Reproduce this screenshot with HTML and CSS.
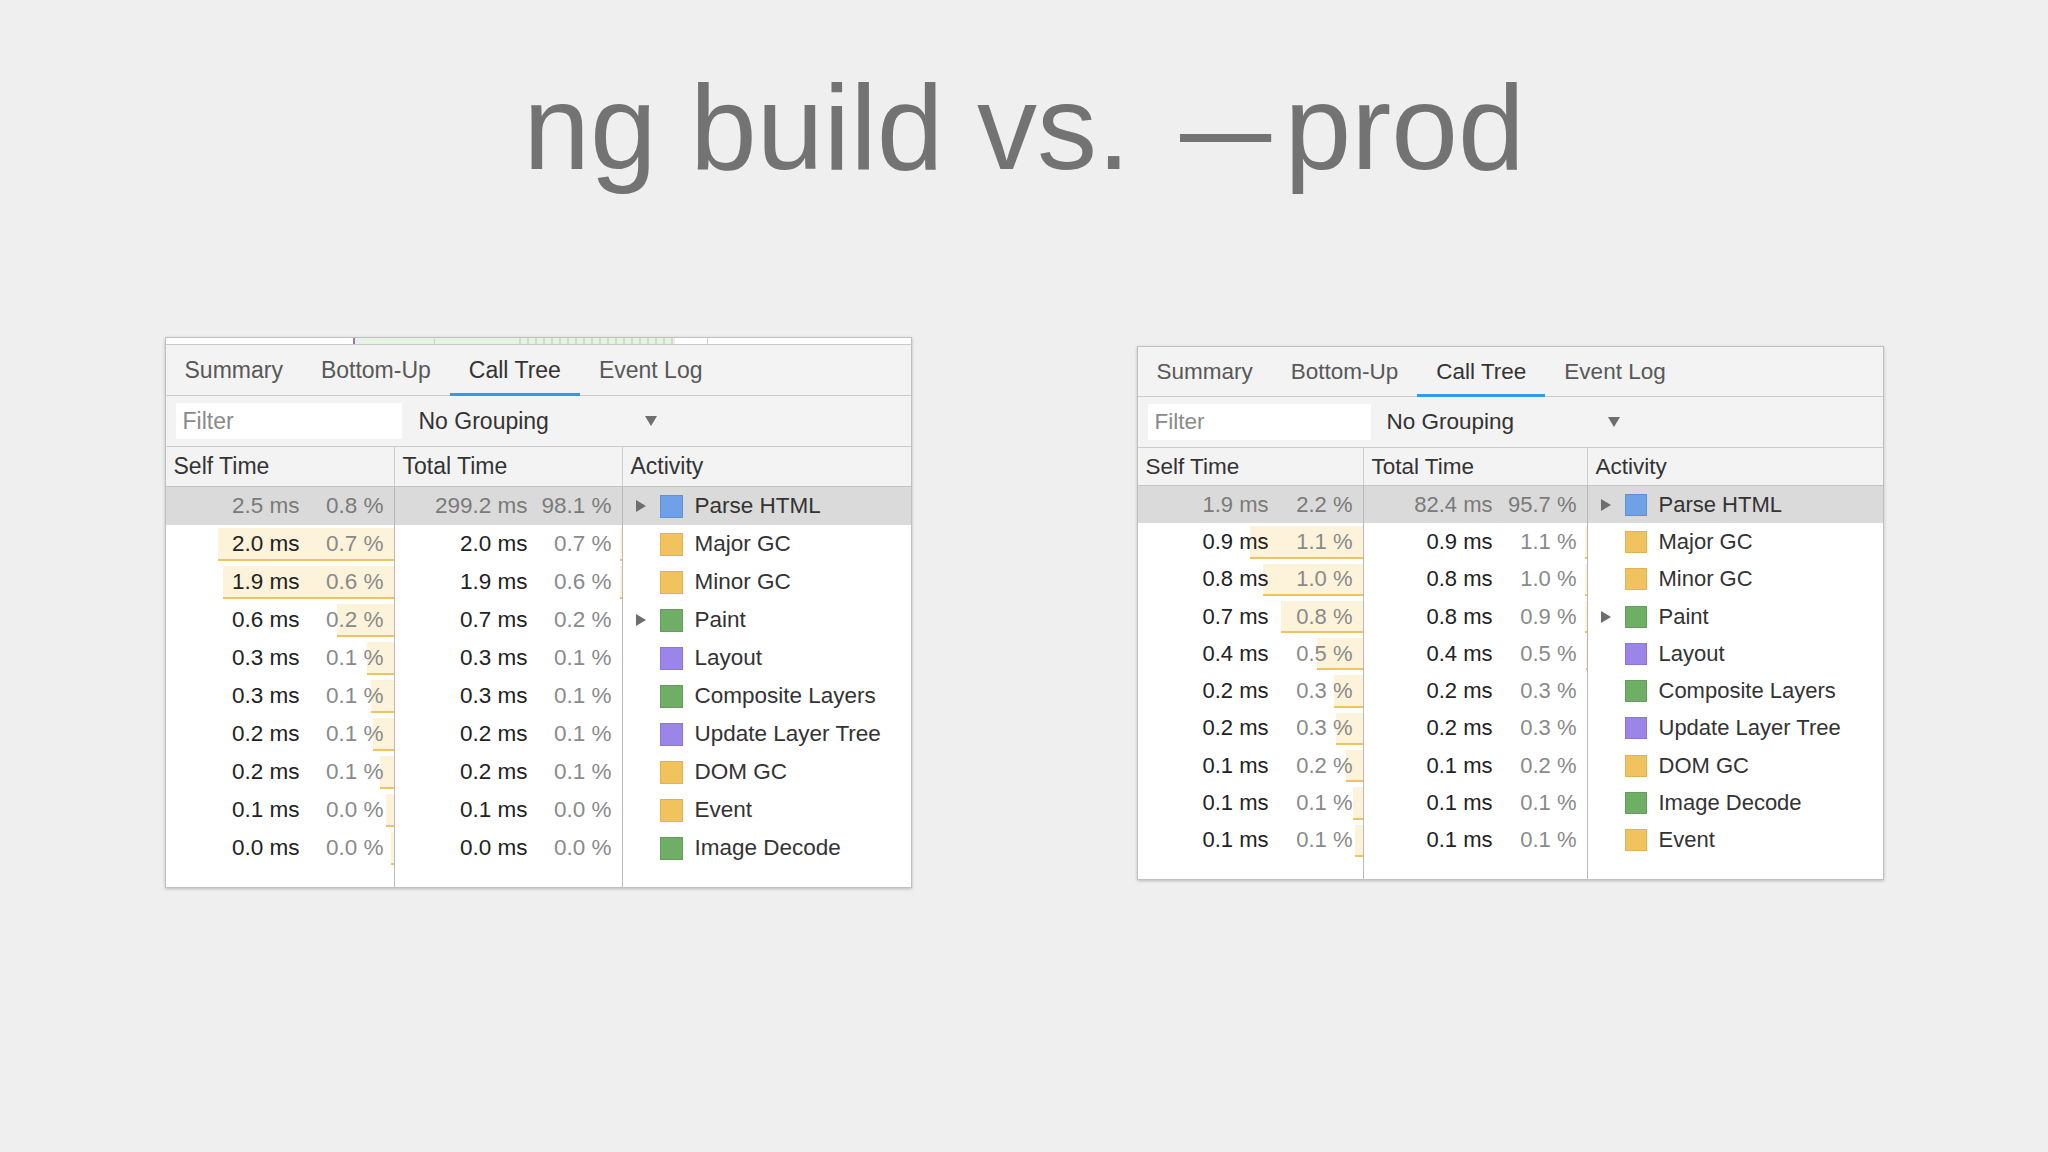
FILE: index.html
```html
<!DOCTYPE html>
<html lang="en">
<head>
<meta charset="utf-8">
<title>ng build vs. —prod</title>
<link rel="stylesheet" href="styles.css">
</head>
<body>
<div class="slide">
  <h1 class="title">ng build vs. <span class="title__dash">—</span>prod</h1>
  <div class="panels">

    <section class="panel panel--left">
      <div class="strip">
        <span class="strip__tick strip__tick--color"></span>
        <span class="strip__green">
          <span class="strip__mark strip__mark--a"></span>
          <span class="strip__dots"></span>
        </span>
        <span class="strip__mark strip__mark--b"></span>
      </div>
      <nav class="tabs">
        <span class="tab">Summary</span>
        <span class="tab">Bottom-Up</span>
        <span class="tab tab--active">Call Tree</span>
        <span class="tab">Event Log</span>
      </nav>
      <div class="toolbar">
        <div class="filter">Filter</div>
        <div class="grouping"><span>No Grouping</span><svg class="arrow" viewBox="0 0 12 10"><polygon points="0,0 12,0 6,10"/></svg></div>
      </div>
      <div class="table">
        <div class="row row--head"><div class="cell">Self Time</div><div class="cell">Total Time</div><div class="cell">Activity</div></div>

        <div class="row row--selected">
          <div class="cell num"><span class="ms">2.5 ms</span><span class="pct">0.8 %</span></div>
          <div class="cell num"><span class="ms">299.2 ms</span><span class="pct">98.1 %</span></div>
          <div class="cell act"><svg class="expander" viewBox="0 0 10 12"><polygon points="0,0 10,6 0,12"/></svg><span class="swatch swatch--blue"></span><span>Parse HTML</span></div>
        </div>
        <div class="row">
          <div class="cell num bar" style="--w:176px"><span class="ms">2.0 ms</span><span class="pct">0.7 %</span></div>
          <div class="cell num bar" style="--w:2px"><span class="ms">2.0 ms</span><span class="pct">0.7 %</span></div>
          <div class="cell act"><svg class="expander expander--none" viewBox="0 0 10 12"></svg><span class="swatch swatch--yellow"></span><span>Major GC</span></div>
        </div>
        <div class="row">
          <div class="cell num bar" style="--w:171px"><span class="ms">1.9 ms</span><span class="pct">0.6 %</span></div>
          <div class="cell num bar" style="--w:2px"><span class="ms">1.9 ms</span><span class="pct">0.6 %</span></div>
          <div class="cell act"><svg class="expander expander--none" viewBox="0 0 10 12"></svg><span class="swatch swatch--yellow"></span><span>Minor GC</span></div>
        </div>
        <div class="row">
          <div class="cell num bar" style="--w:57px"><span class="ms">0.6 ms</span><span class="pct">0.2 %</span></div>
          <div class="cell num"><span class="ms">0.7 ms</span><span class="pct">0.2 %</span></div>
          <div class="cell act"><svg class="expander" viewBox="0 0 10 12"><polygon points="0,0 10,6 0,12"/></svg><span class="swatch swatch--green"></span><span>Paint</span></div>
        </div>
        <div class="row">
          <div class="cell num bar" style="--w:27px"><span class="ms">0.3 ms</span><span class="pct">0.1 %</span></div>
          <div class="cell num"><span class="ms">0.3 ms</span><span class="pct">0.1 %</span></div>
          <div class="cell act"><svg class="expander expander--none" viewBox="0 0 10 12"></svg><span class="swatch swatch--purple"></span><span>Layout</span></div>
        </div>
        <div class="row">
          <div class="cell num bar" style="--w:23px"><span class="ms">0.3 ms</span><span class="pct">0.1 %</span></div>
          <div class="cell num"><span class="ms">0.3 ms</span><span class="pct">0.1 %</span></div>
          <div class="cell act"><svg class="expander expander--none" viewBox="0 0 10 12"></svg><span class="swatch swatch--green"></span><span>Composite Layers</span></div>
        </div>
        <div class="row">
          <div class="cell num bar" style="--w:21px"><span class="ms">0.2 ms</span><span class="pct">0.1 %</span></div>
          <div class="cell num"><span class="ms">0.2 ms</span><span class="pct">0.1 %</span></div>
          <div class="cell act"><svg class="expander expander--none" viewBox="0 0 10 12"></svg><span class="swatch swatch--purple"></span><span>Update Layer Tree</span></div>
        </div>
        <div class="row">
          <div class="cell num bar" style="--w:14px"><span class="ms">0.2 ms</span><span class="pct">0.1 %</span></div>
          <div class="cell num"><span class="ms">0.2 ms</span><span class="pct">0.1 %</span></div>
          <div class="cell act"><svg class="expander expander--none" viewBox="0 0 10 12"></svg><span class="swatch swatch--yellow"></span><span>DOM GC</span></div>
        </div>
        <div class="row">
          <div class="cell num bar" style="--w:8px"><span class="ms">0.1 ms</span><span class="pct">0.0 %</span></div>
          <div class="cell num"><span class="ms">0.1 ms</span><span class="pct">0.0 %</span></div>
          <div class="cell act"><svg class="expander expander--none" viewBox="0 0 10 12"></svg><span class="swatch swatch--yellow"></span><span>Event</span></div>
        </div>
        <div class="row">
          <div class="cell num bar" style="--w:3px"><span class="ms">0.0 ms</span><span class="pct">0.0 %</span></div>
          <div class="cell num"><span class="ms">0.0 ms</span><span class="pct">0.0 %</span></div>
          <div class="cell act"><svg class="expander expander--none" viewBox="0 0 10 12"></svg><span class="swatch swatch--green"></span><span>Image Decode</span></div>
        </div>
        <div class="row row--filler"><div class="cell"></div><div class="cell"></div><div class="cell"></div></div>
      </div>
    </section>

    <section class="panel panel--right">
      <nav class="tabs">
        <span class="tab">Summary</span>
        <span class="tab">Bottom-Up</span>
        <span class="tab tab--active">Call Tree</span>
        <span class="tab">Event Log</span>
      </nav>
      <div class="toolbar">
        <div class="filter">Filter</div>
        <div class="grouping"><span>No Grouping</span><svg class="arrow" viewBox="0 0 12 10"><polygon points="0,0 12,0 6,10"/></svg></div>
      </div>
      <div class="table">
        <div class="row row--head"><div class="cell">Self Time</div><div class="cell">Total Time</div><div class="cell">Activity</div></div>

        <div class="row row--selected">
          <div class="cell num"><span class="ms">1.9 ms</span><span class="pct">2.2 %</span></div>
          <div class="cell num"><span class="ms">82.4 ms</span><span class="pct">95.7 %</span></div>
          <div class="cell act"><svg class="expander" viewBox="0 0 10 12"><polygon points="0,0 10,6 0,12"/></svg><span class="swatch swatch--blue"></span><span>Parse HTML</span></div>
        </div>
        <div class="row">
          <div class="cell num bar" style="--w:113px"><span class="ms">0.9 ms</span><span class="pct">1.1 %</span></div>
          <div class="cell num bar" style="--w:2px"><span class="ms">0.9 ms</span><span class="pct">1.1 %</span></div>
          <div class="cell act"><svg class="expander expander--none" viewBox="0 0 10 12"></svg><span class="swatch swatch--yellow"></span><span>Major GC</span></div>
        </div>
        <div class="row">
          <div class="cell num bar" style="--w:100px"><span class="ms">0.8 ms</span><span class="pct">1.0 %</span></div>
          <div class="cell num bar" style="--w:2px"><span class="ms">0.8 ms</span><span class="pct">1.0 %</span></div>
          <div class="cell act"><svg class="expander expander--none" viewBox="0 0 10 12"></svg><span class="swatch swatch--yellow"></span><span>Minor GC</span></div>
        </div>
        <div class="row">
          <div class="cell num bar" style="--w:82px"><span class="ms">0.7 ms</span><span class="pct">0.8 %</span></div>
          <div class="cell num bar" style="--w:2px"><span class="ms">0.8 ms</span><span class="pct">0.9 %</span></div>
          <div class="cell act"><svg class="expander" viewBox="0 0 10 12"><polygon points="0,0 10,6 0,12"/></svg><span class="swatch swatch--green"></span><span>Paint</span></div>
        </div>
        <div class="row">
          <div class="cell num bar" style="--w:46px"><span class="ms">0.4 ms</span><span class="pct">0.5 %</span></div>
          <div class="cell num bar" style="--w:1px"><span class="ms">0.4 ms</span><span class="pct">0.5 %</span></div>
          <div class="cell act"><svg class="expander expander--none" viewBox="0 0 10 12"></svg><span class="swatch swatch--purple"></span><span>Layout</span></div>
        </div>
        <div class="row">
          <div class="cell num bar" style="--w:29px"><span class="ms">0.2 ms</span><span class="pct">0.3 %</span></div>
          <div class="cell num"><span class="ms">0.2 ms</span><span class="pct">0.3 %</span></div>
          <div class="cell act"><svg class="expander expander--none" viewBox="0 0 10 12"></svg><span class="swatch swatch--green"></span><span>Composite Layers</span></div>
        </div>
        <div class="row">
          <div class="cell num bar" style="--w:27px"><span class="ms">0.2 ms</span><span class="pct">0.3 %</span></div>
          <div class="cell num"><span class="ms">0.2 ms</span><span class="pct">0.3 %</span></div>
          <div class="cell act"><svg class="expander expander--none" viewBox="0 0 10 12"></svg><span class="swatch swatch--purple"></span><span>Update Layer Tree</span></div>
        </div>
        <div class="row">
          <div class="cell num bar" style="--w:17px"><span class="ms">0.1 ms</span><span class="pct">0.2 %</span></div>
          <div class="cell num"><span class="ms">0.1 ms</span><span class="pct">0.2 %</span></div>
          <div class="cell act"><svg class="expander expander--none" viewBox="0 0 10 12"></svg><span class="swatch swatch--yellow"></span><span>DOM GC</span></div>
        </div>
        <div class="row">
          <div class="cell num bar" style="--w:10px"><span class="ms">0.1 ms</span><span class="pct">0.1 %</span></div>
          <div class="cell num"><span class="ms">0.1 ms</span><span class="pct">0.1 %</span></div>
          <div class="cell act"><svg class="expander expander--none" viewBox="0 0 10 12"></svg><span class="swatch swatch--green"></span><span>Image Decode</span></div>
        </div>
        <div class="row">
          <div class="cell num bar" style="--w:8px"><span class="ms">0.1 ms</span><span class="pct">0.1 %</span></div>
          <div class="cell num"><span class="ms">0.1 ms</span><span class="pct">0.1 %</span></div>
          <div class="cell act"><svg class="expander expander--none" viewBox="0 0 10 12"></svg><span class="swatch swatch--yellow"></span><span>Event</span></div>
        </div>
        <div class="row row--filler"><div class="cell"></div><div class="cell"></div><div class="cell"></div></div>
      </div>
    </section>

  </div>
</div>
</body>
</html>
```

FILE: styles.css
```css
* { box-sizing: border-box; }

body {
  margin: 0;
  background: #efefef;
  font-family: "Liberation Sans", Arial, sans-serif;
}

.slide {
  width: 2048px;
  height: 1152px;
  padding-top: 57px;
}

.title {
  margin: 0;
  text-align: center;
  font-weight: 400;
  font-size: 120px;
  line-height: 140px;
  color: #737373;
}

.title__dash {
  display: inline-block;
  transform: scaleX(0.76);
  transform-origin: left center;
  margin-left: 16px;
  margin-right: -15px;
}

.panels {
  margin-top: 140px;
  display: flex;
  justify-content: center;
  align-items: flex-start;
  gap: 225px;
}

.panel {
  --c1: 229px;
  --c2: 228px;
  --rh: 38px;
  --fs: 22.5px;
  --tabfs: 23px;
  --headh: 40px;
  --tabh: 51px;
  --filterw: 226px;
  --groupgap: 17px;
  --groupw: 238px;
  width: 747px;
  background: #fff;
  border: 1px solid #c0c0c0;
  box-shadow: 0 1px 3px rgba(0, 0, 0, 0.22);
  display: flex;
  flex-direction: column;
  color: #333;
}

.panel--right {
  --c1: 226px;
  --c2: 224px;
  --rh: 37.3px;
  --fs: 22px;
  --tabfs: 22.5px;
  --headh: 38px;
  --tabh: 50px;
  --filterw: 223px;
  --groupgap: 16px;
  --groupw: 233px;
  margin-top: 9px;
}

/* timeline overview strip */
.strip {
  height: 7px;
  background: #fff;
  border-bottom: 1px solid #c8c8c8;
  display: flex;
  align-items: stretch;
  padding-left: 187px;
}

.strip__tick--color {
  width: 2px;
  background: linear-gradient(90deg, #d06a8a, #6a7fe0);
}

.strip__green {
  width: 320px;
  background: #e6f2e2;
  display: flex;
  align-items: stretch;
  padding-left: 79px;
}

.strip__mark {
  width: 1px;
  background: #cfcfcf;
}

.strip__dots {
  margin-left: 84px;
  width: 155px;
  background: repeating-linear-gradient(90deg, #c9e3c2 0 2px, transparent 2px 8px);
}

.strip__mark--b {
  margin-left: 32px;
}

/* tabs */
.tabs {
  height: var(--tabh);
  background: #f3f3f3;
  border-bottom: 1px solid #cbcbcb;
  display: flex;
}

.tab {
  display: flex;
  align-items: center;
  padding: 0 19px;
  margin-bottom: -1px;
  font-size: var(--tabfs);
  color: #585858;
}

.tab--active {
  color: #333;
  box-shadow: inset 0 -3px 0 #3399ea;
}

/* toolbar */
.toolbar {
  height: 51px;
  background: #f3f3f3;
  border-bottom: 1px solid #cbcbcb;
  display: flex;
  align-items: center;
  padding-left: 10px;
}

.filter {
  width: var(--filterw);
  height: 36px;
  background: #fff;
  padding-left: 7px;
  display: flex;
  align-items: center;
  font-size: var(--tabfs);
  color: #8a8a8a;
}

.grouping {
  margin-left: var(--groupgap);
  width: var(--groupw);
  display: flex;
  justify-content: space-between;
  align-items: center;
  font-size: var(--tabfs);
  color: #333;
}

.arrow {
  width: 12px;
  height: 10px;
  fill: #6e6e6e;
}

/* table */
.table {
  display: flex;
  flex-direction: column;
}

.row {
  display: grid;
  grid-template-columns: var(--c1) var(--c2) 1fr;
  height: var(--rh);
  font-size: var(--fs);
}

.cell {
  border-right: 1px solid #b8b8b8;
  display: flex;
  align-items: center;
  white-space: nowrap;
}

.cell:last-child {
  border-right: 0;
}

.row--head {
  height: var(--headh);
  background: #f3f3f3;
  border-bottom: 1px solid #c4c4c4;
  font-size: var(--tabfs);
  color: #333;
}

.row--head .cell {
  padding-left: 8px;
  border-right-color: #cdcdcd;
}

.row--selected {
  background: #dadada;
}

.row--filler {
  height: 20px;
}

.num {
  justify-content: flex-end;
  padding-right: 10px;
}

.ms {
  color: #222;
}

.pct {
  width: 84px;
  text-align: right;
  color: #8a8a8a;
}

.row--selected .ms,
.row--selected .pct {
  color: #7a7a7a;
}

.bar {
  background:
    linear-gradient(#f0c260, #f0c260) right 0 bottom 2px / var(--w) 2px no-repeat,
    linear-gradient(#fcf3da, #fcf3da) right 0 bottom 4px / var(--w) calc(100% - 7px) no-repeat;
}

.act {
  padding-left: 13px;
  color: #333;
}

.expander {
  width: 10px;
  height: 12px;
  flex: none;
  fill: #6e6e6e;
}

.expander--none {
  visibility: hidden;
}

.swatch {
  width: 23px;
  height: 23px;
  margin-left: 14px;
  margin-right: 12px;
  flex: none;
  border: 1px solid;
}

.panel--right .swatch {
  width: 22px;
  height: 22px;
}

.swatch--blue { background: #6fa1e6; border-color: #5f91d8; }
.swatch--yellow { background: #f1c35e; border-color: #e2b24e; }
.swatch--green { background: #6fae65; border-color: #609e57; }
.swatch--purple { background: #9c85e8; border-color: #8c74da; }
```
